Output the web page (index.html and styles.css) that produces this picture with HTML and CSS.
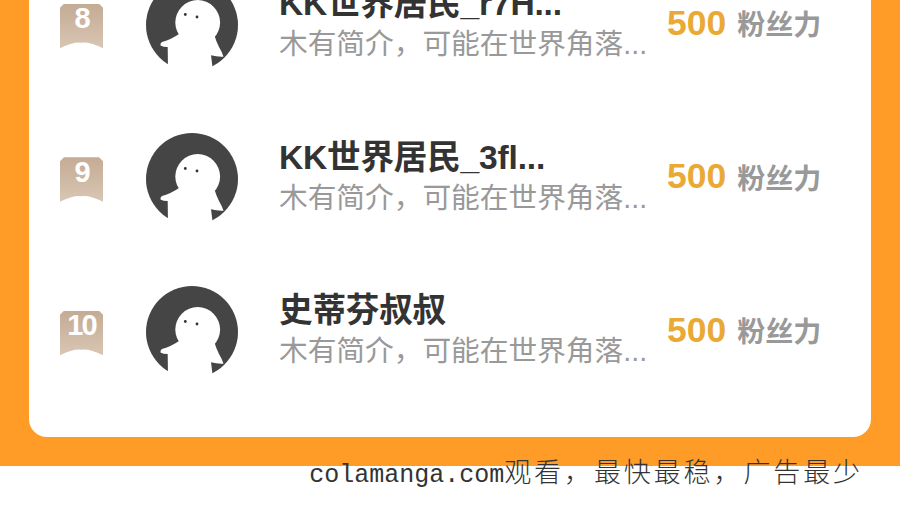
FILE: index.html
```html
<!DOCTYPE html>
<html>
    <head>
        <meta charset="utf-8">
        <title>粉丝榜</title>
        <link rel="stylesheet" href="styles.css">
    </head>
    <body>
        <div class="page">
            <div class="card">
                <div class="row">
                    <div class="badge">8</div>
                    <svg class="avatar" viewBox="0 0 92 92"><use href="#ghost"></use></svg>
                    <div class="info">
                        <div class="name">KK世界居民_r7H...</div>
                        <div class="desc">木有简介，可能在世界角落...</div>
                    </div>
                    <div class="score"><span class="num">500</span><span class="unit">粉丝力</span></div>
                </div>
                <div class="row">
                    <div class="badge">9</div>
                    <svg class="avatar" viewBox="0 0 92 92"><use href="#ghost"></use></svg>
                    <div class="info">
                        <div class="name">KK世界居民_3fl...</div>
                        <div class="desc">木有简介，可能在世界角落...</div>
                    </div>
                    <div class="score"><span class="num">500</span><span class="unit">粉丝力</span></div>
                </div>
                <div class="row">
                    <div class="badge">10</div>
                    <svg class="avatar" viewBox="0 0 92 92"><use href="#ghost"></use></svg>
                    <div class="info">
                        <div class="name">史蒂芬叔叔</div>
                        <div class="desc">木有简介，可能在世界角落...</div>
                    </div>
                    <div class="score"><span class="num">500</span><span class="unit">粉丝力</span></div>
                </div>
            </div>
        </div>
        <p class="caption"><span class="site">colamanga.com</span><span class="slogan">观看，最快最稳，广告最少</span></p>

        <svg class="defs" width="0" height="0">
            <defs>
                <g id="ghost">
                    <circle cx="46" cy="46" r="46" fill="#454545"></circle>
                    <path fill="#fff" d="M22 92 L21.7 68 Q17 68 14.5 66.5 Q14 64 16 63 Q26 60 33 55 L68 55 Q70 62 73 68 Q76 73 77.5 77.7 Q71 78 65 76.3 L67 92 Z"></path>
                    <circle cx="51.7" cy="43.5" r="22.4" fill="#fff"></circle>
                    <circle cx="39.3" cy="35.5" r="1.4" fill="#333"></circle>
                    <circle cx="51" cy="38" r="1.4" fill="#333"></circle>
                </g>
            </defs>
        </svg>
    </body>
</html>
```

FILE: styles.css
```css
html, body {
    margin: 0;
    height: 100%;
    background: #fff;
    overflow: hidden;
}

.page {
    height: 466px;
    box-sizing: border-box;
    padding: 0 29px 29px;
    background: #ff9c28;
    display: flex;
    flex-direction: column;
    justify-content: flex-end;
    overflow: hidden;
}
.card {
    flex-shrink: 0;
    padding: 0 31px 28px;
    background: #fff;
    border-radius: 0 0 18px 18px;
}

.row {
    height: 153.5px;
    display: flex;
    align-items: center;
    font-family: "Liberation Sans", "Noto Sans CJK SC", sans-serif;
}

.badge {
    width: 43px;
    height: 45px;
    flex-shrink: 0;
    margin-top: 2px;
    padding-bottom: 15px;
    box-sizing: border-box;
    display: flex;
    align-items: center;
    justify-content: center;
    font-size: 29px;
    font-weight: 700;
    letter-spacing: -2px;
    color: #fff;
    background: linear-gradient(180deg, #c4ab94 0%, #d8c6b4 100%);
    clip-path: path("M4 0H39L43 4V44.5Q30 38 21.5 39Q13 38 0 44.5V4L4 0Z");
}

.avatar {
    width: 92px;
    height: 92px;
    flex-shrink: 0;
    margin-left: 43px;
}

.info {
    flex: 1;
    margin-left: 41px;
    white-space: nowrap;
}
.name {
    font-size: 33.6px;
    line-height: 40px;
    font-weight: 700;
    letter-spacing: -0.2px;
    color: #333;
    margin-top: -4px;
}
.desc {
    font-size: 28.7px;
    line-height: 40px;
    color: #999;
    margin-bottom: -2px;
}

.score {
    display: flex;
    align-items: center;
    width: 173px;
    flex-shrink: 0;
    padding-bottom: 4px;
    white-space: nowrap;
}
.num {
    font-size: 35.5px;
    font-weight: 700;
    color: #eaa935;
}
.unit {
    margin-left: 11px;
    font-size: 28px;
    font-weight: 700;
    color: #999;
}

.caption {
    margin: -12px 0 0;
    padding-right: 37px;
    text-align: right;
    line-height: 34px;
    color: #333;
    white-space: nowrap;
}
.site {
    font-family: "Liberation Mono", monospace;
    font-size: 25px;
}
.slogan {
    font-family: "Noto Sans CJK SC", sans-serif;
    font-size: 27px;
    font-weight: 300;
    letter-spacing: 2.9px;
}

.defs {
    position: absolute;
}
```
